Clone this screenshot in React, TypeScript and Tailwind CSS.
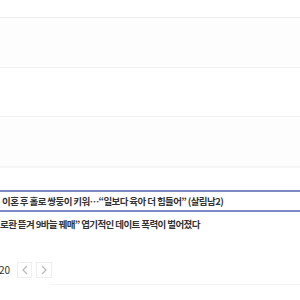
export default function App() {
  const font = { fontFamily: '"Noto Sans CJK KR", "Noto Sans", sans-serif' };
  return (
    <div className="w-[300px] h-[300px] bg-white overflow-hidden" style={font}>
      <div className="h-[17px]" />
      <div className="h-[50px] border-t border-[#efefef] bg-[#fdfdfd]" />
      <div className="h-[49px] border-t border-[#f0f0f0] bg-white" />
      <div className="h-[50px] border-t border-[#f0f0f0] bg-[#fdfdfd]" />
      <div className="h-[24px] border-t-2 border-[#f5f5f5] bg-white" />
      <div className="h-[22px] border-t-2 border-b-2 border-[#7d89c5] flex items-center overflow-hidden whitespace-nowrap">
        <span className="pl-[2px] text-[9.5px] font-semibold text-[#333] tracking-[-0.6px]">
          이혼 후 홀로 쌍둥이 키워…“일보다 육아 더 힘들어” (살림남2)
        </span>
      </div>
      <div className="h-[24px] flex items-center overflow-hidden whitespace-nowrap">
        <span className="text-[9.5px] font-semibold text-[#333] tracking-[-0.6px]">
          로환 뜯겨 9바늘 꿰매” 엽기적인 데이트 폭력이 벌어졌다
        </span>
      </div>
      <div className="h-[26px]" />
      <div className="flex items-center gap-[4px] h-[16px] overflow-hidden">
        <span className="text-[10px] text-[#333] leading-none -ml-[1px] mr-[3px]">20</span>
        <div className="w-[15px] h-[16px] border border-[#eeeeee] flex items-center justify-center">
          <svg width="8" height="10" viewBox="0 0 8 10" fill="none">
            <path d="M6 1 L2 5 L6 9" stroke="#bbbbbb" strokeWidth="1.3" />
          </svg>
        </div>
        <div className="w-[16px] h-[16px] border border-[#eeeeee] flex items-center justify-center">
          <svg width="8" height="10" viewBox="0 0 8 10" fill="none">
            <path d="M2 1 L6 5 L2 9" stroke="#bbbbbb" strokeWidth="1.3" />
          </svg>
        </div>
      </div>
      <div className="ml-[50px] mt-[6px] border-t border-[#f3f3f3]" />
    </div>
  );
}
